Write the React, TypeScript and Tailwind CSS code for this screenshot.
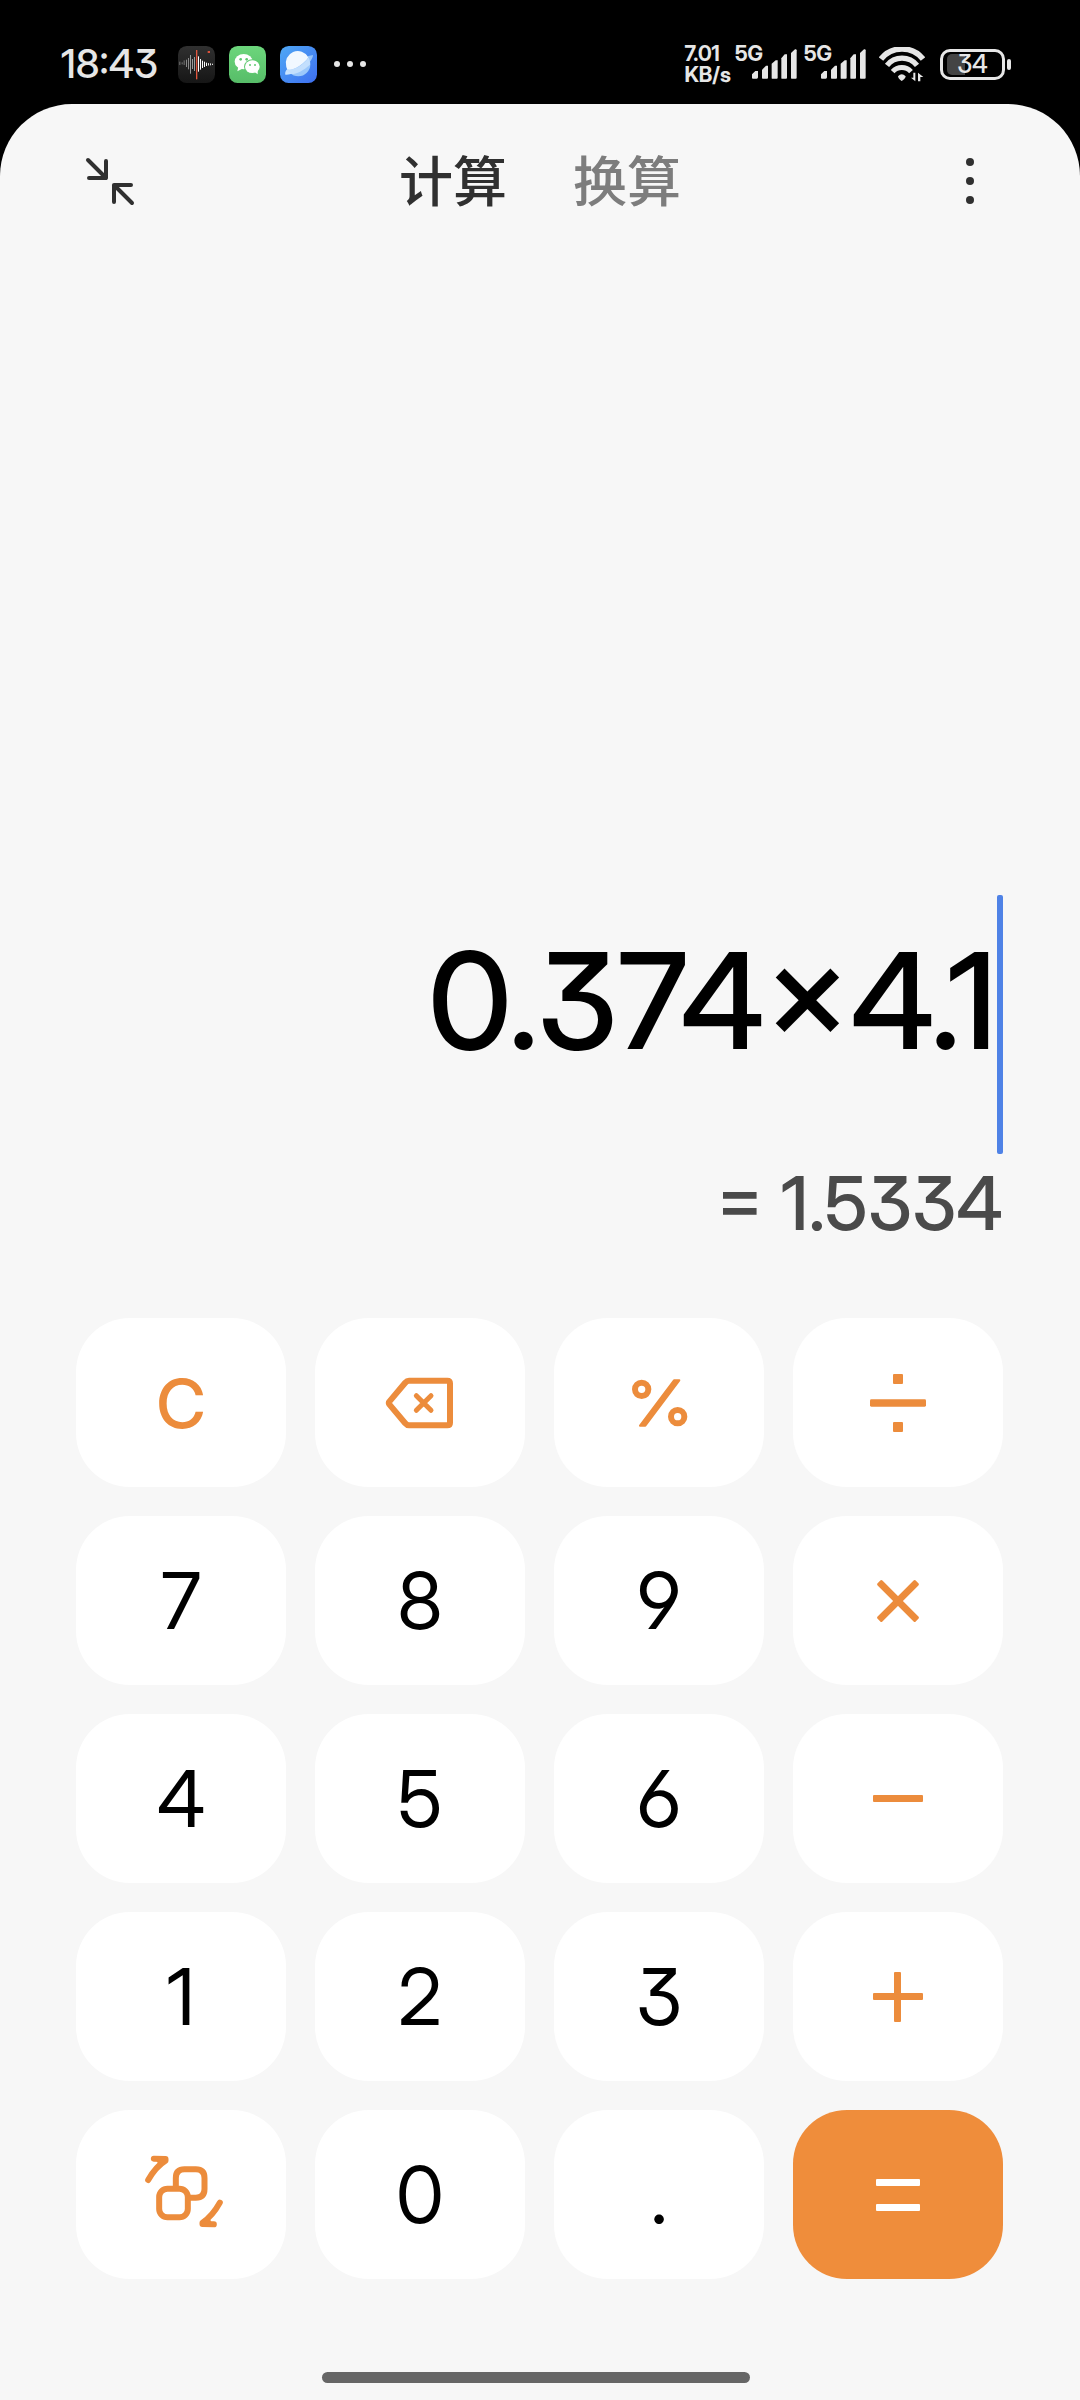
import { useState, type ReactNode } from "react";

function RecorderIcon() {
  const bars = [
    [5, 52, 10, "#777"], [12, 52, 6, "#777"], [18, 50, 14, "#777"], [25, 52, 22, "#8a8a8a"],
    [31, 53, 34, "#8a8a8a"], [37, 55, 56, "#9a9a9a"], [43, 54, 30, "#9a9a9a"], [49, 54, 42, "#9a9a9a"],
    [61, 54, 46, "#fff"], [67, 55, 32, "#fff"], [73, 55, 22, "#fff"], [79, 55, 16, "#fff"],
    [85, 55, 10, "#fff"], [91, 55, 7, "#eee"], [97, 55, 6, "#ddd"], [103, 55, 4, "#ddd"],
  ] as const;
  return (
    <svg viewBox="0 0 111 111" className="size-[37px] shrink-0" aria-label="录音机" role="img">
      <defs>
        <linearGradient id="rec" x1="0" y1="0" x2="0" y2="1">
          <stop offset="0" stopColor="#303030" />
          <stop offset="1" stopColor="#161616" />
        </linearGradient>
      </defs>
      <rect width="111" height="111" rx="26" fill="url(#rec)" />
      {bars.map(([x, c, h, f]) => (
        <rect key={x} x={x - 1} y={c - h / 2} width="3" height={h} fill={f} />
      ))}
      <rect x="54" y="12" width="4" height="88" fill="#e0553d" />
      <rect x="89" y="15" width="7" height="6" fill="#d9503a" />
    </svg>
  );
}

function WeChatIcon() {
  return (
    <svg viewBox="0 0 111 111" className="size-[37px] shrink-0" aria-label="微信" role="img">
      <defs>
        <linearGradient id="wx" x1="0" y1="0" x2="0" y2="1">
          <stop offset="0" stopColor="#6cd67c" />
          <stop offset="1" stopColor="#57bd68" />
        </linearGradient>
      </defs>
      <rect width="111" height="111" rx="26" fill="url(#wx)" />
      <ellipse cx="44" cy="47" rx="27" ry="23" fill="#fff" />
      <path d="M28 62L25 76L40 68Z" fill="#fff" />
      <circle cx="35" cy="40" r="4" fill="#5fc870" />
      <circle cx="53" cy="40" r="4" fill="#5fc870" />
      <ellipse cx="70" cy="62" rx="25" ry="22" fill="#61c971" />
      <ellipse cx="70" cy="62" rx="22" ry="19" fill="#fff" />
      <path d="M76 77L86 85L86 71Z" fill="#fff" />
      <circle cx="63" cy="57" r="3" fill="#5fc870" />
      <circle cx="78" cy="57" r="3" fill="#5fc870" />
    </svg>
  );
}

function BrowserIcon() {
  return (
    <svg viewBox="0 0 111 111" className="size-[37px] shrink-0" aria-label="浏览器" role="img">
      <defs>
        <linearGradient id="br" x1="0" y1="0" x2="1" y2="1">
          <stop offset="0" stopColor="#4fa8f5" />
          <stop offset="1" stopColor="#3e6ff0" />
        </linearGradient>
        <linearGradient id="ring" x1="0" y1="1" x2="1" y2="0">
          <stop offset="0" stopColor="#cfe8ff" />
          <stop offset="1" stopColor="#8fc0fb" />
        </linearGradient>
      </defs>
      <rect width="111" height="111" rx="26" fill="url(#br)" />
      <circle cx="55" cy="55" r="36" fill="#9cc8fb" />
      <path d="M19 62A36 36 0 0 1 85 34C74 52 40 76 22 72Z" fill="#f1f8ff" />
      <path d="M82 31L99 27C100 46 54 88 16 86C14 80 18 72 22 70C46 76 76 52 85 35Z" fill="url(#ring)" />
      <path d="M21 70C46 76 78 50 85 34C89 40 91 48 90 56C70 74 50 84 34 84Z" fill="#c3dffd" />
    </svg>
  );
}

function Signal() {
  return (
    <div className="flex h-9 items-start">
      <span className="text-[21px] leading-4 font-bold">5G</span>
      <svg viewBox="0 0 135 90" className="mb-[3px] -ml-[11px] h-[30px] w-[45px] self-end" fill="#e6e6e6" aria-hidden="true">
        <path d="M0 88V76L10 66H18V85Q18 89 14 89H3Q0 89 0 87Z" />
        <path d="M32 89Q30 89 30 86V62L42 50H48V86Q48 89 45 89Z" />
        <path d="M60 89Q59 89 59 86V44L71 34H77V86Q77 89 74 89Z" />
        <path d="M89 89Q88 89 88 86V28L98 16H105V86Q105 89 102 89Z" />
        <path d="M119 89Q117 89 117 86V12L129 1Q134 0 134 4V86Q134 89 131 89Z" />
      </svg>
    </div>
  );
}

function Wifi() {
  return (
    <svg viewBox="0 0 138 105" className="h-[35px] w-[46px]" fill="none" stroke="#e6e6e6" aria-label="Wi-Fi" role="img">
      <path d="M6 36A81 81 0 0 1 132 36" strokeWidth="17" />
      <path d="M24 55A58 58 0 0 1 114 55" strokeWidth="16" />
      <path d="M41 74A37 37 0 0 1 96 74" strokeWidth="15" />
      <path d="M57 88Q68 76 80 88Q80 94 68 102Q57 94 57 88Z" fill="#e6e6e6" stroke="none" />
      <path d="M109 77V103L96 92H103V77ZM117 103V77L133 90H124V103Z" fill="#e6e6e6" stroke="none" />
    </svg>
  );
}

function Battery() {
  return (
    <div className="flex items-center gap-[2px]">
      <div className="relative flex h-[31px] w-[65px] items-center justify-center overflow-hidden rounded-[10px] border-3 border-[#e6e6e6]">
        <span className="absolute inset-y-[2px] left-1 w-[18px] rounded-l-[5px] bg-[#444]" />
        <span className="relative text-[25px] leading-6 font-medium">34</span>
      </div>
      <span className="h-[11px] w-1 rounded-[2px] bg-[#e6e6e6]" />
    </div>
  );
}

function StatusBar() {
  return (
    <div className="flex h-[104px] shrink-0 items-center justify-between pt-[24px] pr-[69px] pl-[61px] text-[#e6e6e6]">
      <div className="flex items-center gap-[14px]">
        <span className="mr-[6px] text-[40px] leading-10 font-medium">18:43</span>
        <RecorderIcon />
        <WeChatIcon />
        <BrowserIcon />
        <svg viewBox="0 0 32 6" className="ml-[3px] h-[6px] w-8" fill="#e6e6e6" aria-hidden="true">
          <circle cx="3" cy="3" r="3" />
          <circle cx="16" cy="3" r="3" />
          <circle cx="29" cy="3" r="3" />
        </svg>
      </div>
      <div className="flex items-center">
        <p className="mr-1 text-[21px] leading-[21px] font-bold">
          7.01
          <br />
          KB/s
        </p>
        <div className="mr-[13px] flex gap-[7px]">
          <Signal />
          <Signal />
        </div>
        <div className="mr-[15px]">
          <Wifi />
        </div>
        <Battery />
      </div>
    </div>
  );
}

const iconClass = "shrink-0 text-[#ec8c3c]";

function BackspaceIcon() {
  return (
    <svg viewBox="0 0 228 180" className={`h-[60px] w-[76px] ${iconClass}`} fill="none" stroke="currentColor" strokeLinecap="round" strokeLinejoin="round" aria-hidden="true">
      <path d="M22 86L69 30Q75 23 81 23H196Q204 23 204 31V149Q204 157 196 157H81Q75 157 69 150L22 94Q19 90 22 86Z" strokeWidth="18" />
      <path d="M103 68L147 112M147 68L103 112" strokeWidth="15" />
    </svg>
  );
}

function PercentIcon() {
  return (
    <svg viewBox="0 0 180 150" className={`h-[50px] w-[60px] ${iconClass}`} fill="none" stroke="currentColor" aria-hidden="true">
      <circle cx="38" cy="34" r="20" strokeWidth="18" />
      <circle cx="146" cy="116" r="20" strokeWidth="18" />
      <path d="M33 143L135 7H151L49 143Z" fill="currentColor" strokeWidth="6" strokeLinejoin="round" />
    </svg>
  );
}

function DivideIcon() {
  return (
    <svg viewBox="0 0 168 180" className={`h-[60px] w-[56px] ${iconClass}`} fill="currentColor" aria-hidden="true">
      <rect x="0" y="79" width="168" height="22" rx="4" />
      <rect x="69" y="3" width="30" height="30" rx="3" />
      <rect x="69" y="147" width="30" height="30" rx="3" />
    </svg>
  );
}

function TimesIcon() {
  return (
    <svg viewBox="0 0 126 126" className={`size-[42px] ${iconClass}`} stroke="currentColor" strokeWidth="9" strokeLinejoin="round" fill="currentColor" aria-hidden="true">
      <path d="M13 5L121 113L113 121L5 13Z" />
      <path d="M113 5L121 13L13 121L5 113Z" />
    </svg>
  );
}

function MinusIcon() {
  return (
    <svg viewBox="0 0 50 50" className={`size-[50px] ${iconClass}`} fill="currentColor" aria-hidden="true">
      <rect x="0" y="21" width="50" height="7" rx="1" />
    </svg>
  );
}

function PlusIcon() {
  return (
    <svg viewBox="0 0 50 50" className={`size-[50px] ${iconClass}`} fill="currentColor" aria-hidden="true">
      <rect x="0" y="21" width="50" height="7" rx="1" />
      <rect x="21" y="0" width="7" height="50" rx="1" />
    </svg>
  );
}

function EqualsIcon() {
  return (
    <svg viewBox="0 0 44 32" className="h-8 w-11 shrink-0" fill="#fff" aria-hidden="true">
      <rect x="0" y="0" width="44" height="7" rx="1" />
      <rect x="0" y="25" width="44" height="7" rx="1" />
    </svg>
  );
}

function SwitchIcon() {
  return (
    <svg viewBox="235 187 260 252" className={`h-[84px] w-[87px] ${iconClass}`} fill="none" stroke="currentColor" strokeWidth="18" strokeLinecap="round" strokeLinejoin="round" aria-hidden="true">
      <rect x="298" y="294" width="86" height="86" rx="25" />
      <path d="M348 290V262Q348 236 374 236H408Q434 236 434 262V295Q434 321 408 321H392" />
      <path d="M282 204L317 205V210Q288 228 265 268" />
      <path d="M288 204H318V211L298 220Z" fill="currentColor" strokeWidth="4" />
      <path d="M462 401L428 400V396Q458 376 480 336" />
      <path d="M456 400H428V394L447 384Z" fill="currentColor" strokeWidth="4" />
    </svg>
  );
}

type Key = { label: string; face: ReactNode; primary?: boolean };

const keys: Key[] = [
  { label: "清除", face: <span className="text-[68px] leading-none font-medium text-[#ec8c3c]">C</span> },
  { label: "退格", face: <BackspaceIcon /> },
  { label: "百分号", face: <PercentIcon /> },
  { label: "除", face: <DivideIcon /> },
  { label: "7", face: "7" },
  { label: "8", face: "8" },
  { label: "9", face: "9" },
  { label: "乘", face: <TimesIcon /> },
  { label: "4", face: "4" },
  { label: "5", face: "5" },
  { label: "6", face: "6" },
  { label: "减", face: <MinusIcon /> },
  { label: "1", face: "1" },
  { label: "2", face: "2" },
  { label: "3", face: "3" },
  { label: "加", face: <PlusIcon /> },
  { label: "切换", face: <SwitchIcon /> },
  { label: "0", face: "0" },
  { label: "小数点", face: "." },
  { label: "等于", face: <EqualsIcon />, primary: true },
];

export default function App() {
  const [expression, setExpression] = useState("0.374×4.1");
  return (
    <div className="flex min-h-screen flex-col bg-black font-['Inter_Display','Inter','Noto_Sans_CJK_SC',sans-serif] [font-feature-settings:'cv09','cv03','cv04']">
      <StatusBar />
      <main className="flex flex-1 flex-col rounded-t-[72px] bg-[#f7f7f7]">
        <header className="flex h-[154px] items-center justify-between px-[84px]">
          <button type="button" aria-label="小窗" className="flex w-[52px] justify-center">
            <svg viewBox="0 0 52 52" className="size-[52px]" fill="none" stroke="#303030" strokeWidth="4" strokeLinecap="round" strokeLinejoin="round" aria-hidden="true">
              <path d="M4 5L22 23M22 6V23H5" />
              <path d="M48 48L30 30M30 47V30H47" />
            </svg>
          </button>
          <nav role="tablist" className="flex gap-[66px] pb-1 font-['Noto_Sans_CJK_SC',sans-serif] text-[54px] leading-[60px] font-medium">
            <button type="button" role="tab" aria-selected="true" className="text-[#303030]">计算</button>
            <button type="button" role="tab" aria-selected="false" className="text-[#7d7d7d]">换算</button>
          </nav>
          <button type="button" aria-label="更多" className="flex w-[52px] justify-center">
            <svg viewBox="0 0 8 48" className="h-12 w-2" fill="#303030" aria-hidden="true">
              <circle cx="4" cy="5" r="4" />
              <circle cx="4" cy="24" r="4" />
              <circle cx="4" cy="43" r="4" />
            </svg>
          </button>
        </header>

        <section className="flex flex-1 flex-col justify-end px-[77px] pb-[66px]">
          <div className="flex h-[259px] items-start">
            <input
              aria-label="算式"
              value={expression}
              onChange={(e) => setExpression(e.target.value)}
              className="h-[210px] min-w-0 flex-1 bg-transparent text-right text-[134px] font-medium text-black caret-transparent outline-none"
            />
            <span className="h-full w-[6px] shrink-0 rounded-[2px] bg-[#4f82e6]" />
          </div>
          <output className="text-right text-[74px] leading-[98px] font-medium text-[#4a4a4a]">= 1.5334</output>
        </section>

        <div className="grid grid-cols-4 gap-[29px] pr-[77px] pl-[76px]">
          {keys.map((k) => (
            <button
              key={k.label}
              type="button"
              aria-label={k.label}
              className={`flex h-[169px] items-center justify-center rounded-[54px] text-[78px] leading-none text-black ${k.primary ? "bg-[#ef8d3b]" : "bg-white"}`}
            >
              {k.face}
            </button>
          ))}
        </div>

        <div className="flex justify-center pt-[93px] pr-2 pb-[17px]">
          <div className="h-[11px] w-[428px] rounded-full bg-[#666]" />
        </div>
      </main>
    </div>
  );
}
